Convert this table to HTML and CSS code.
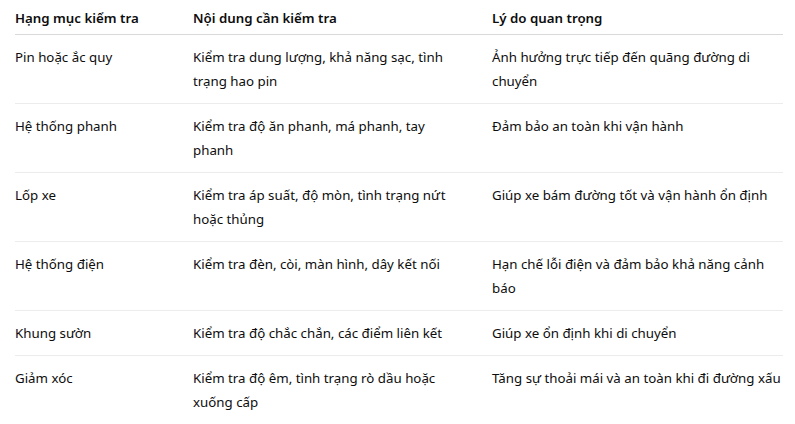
FILE: index.html
```html
<!DOCTYPE html>
<html lang="vi">
<head>
<meta charset="utf-8">
<link rel="stylesheet" href="styles.css">
</head>
<body>
<div class="wrap">
<table class="grid">
<colgroup><col class="c1"><col class="c2"><col class="c3"></colgroup>
<thead>
<tr><th>Hạng mục kiểm tra</th><th>Nội dung cần kiểm tra</th><th>Lý do quan trọng</th></tr>
</thead>
<tbody>
<tr><td>Pin hoặc ắc quy</td><td>Kiểm tra dung lượng, khả năng sạc, tình trạng hao pin</td><td>Ảnh hưởng trực tiếp đến quãng đường di chuyển</td></tr>
<tr><td>Hệ thống phanh</td><td>Kiểm tra độ ăn phanh, má phanh, tay phanh</td><td>Đảm bảo an toàn khi vận hành</td></tr>
<tr><td>Lốp xe</td><td>Kiểm tra áp suất, độ mòn, tình trạng nứt hoặc thủng</td><td>Giúp xe bám đường tốt và vận hành ổn định</td></tr>
<tr><td>Hệ thống điện</td><td>Kiểm tra đèn, còi, màn hình, dây kết nối</td><td>Hạn chế lỗi điện và đảm bảo khả năng cảnh báo</td></tr>
<tr><td>Khung sườn</td><td>Kiểm tra độ chắc chắn, các điểm liên kết</td><td>Giúp xe ổn định khi di chuyển</td></tr>
<tr><td>Giảm xóc</td><td>Kiểm tra độ êm, tình trạng rò dầu hoặc xuống cấp</td><td>Tăng sự thoải mái và an toàn khi đi đường xấu</td></tr>
</tbody>
</table>
</div>
</body>
</html>
```
FILE: styles.css
```css
html, body {
  margin: 0;
  padding: 0;
  background: #ffffff;
}
.wrap {
  padding: 6px 12px 0 15px;
  font-family: "Noto Sans", "Open Sans", sans-serif;
  font-size: 13.3px;
  line-height: 24px;
  color: #0d0d0d;
}
.grid {
  width: 768px;
  border-collapse: collapse;
  table-layout: fixed;
}
.c1 { width: 178px; }
.c2 { width: 299px; }
.c3 { width: 291px; }
.grid th {
  text-align: left;
  font-weight: 600;
  padding: 0 16px 4px 0;
  border-bottom: 1px solid #d9d9d9;
  vertical-align: top;
}
.grid td {
  padding: 10px 16px 10px 0;
  vertical-align: top;
  border-bottom: 1px solid #ececec;
}
.grid td:nth-child(2) {
  padding-right: 31px;
}
.grid th:last-child, .grid td:last-child {
  padding-right: 0;
}
.grid tbody tr:last-child td {
  border-bottom: none;
}
```
